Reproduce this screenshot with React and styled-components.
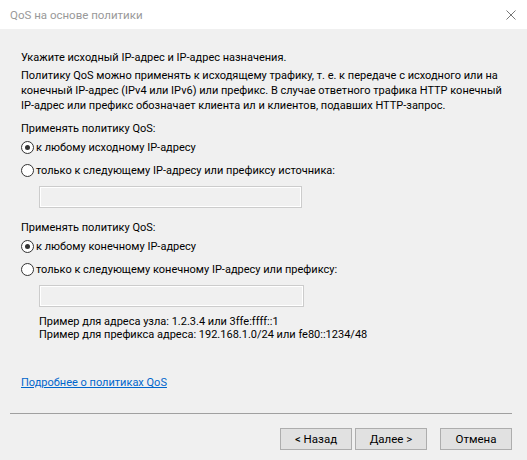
import React from "react";
import styled, { createGlobalStyle } from "styled-components";

const GlobalStyle = createGlobalStyle`
  body {
    margin: 0;
    background: #f0f0f0;
    font-family: Roboto, "Liberation Sans", sans-serif;
    font-size: 11px;
    color: #000;
  }
`;

const Window = styled.div`
  width: 527px;
  height: 460px;
  display: flex;
  flex-direction: column;
  background: #f0f0f0;
  overflow: hidden;
`;

const TitleBar = styled.div`
  height: 29px;
  background: #fff;
  display: flex;
  align-items: center;
  justify-content: space-between;
  padding: 0 10px;
  color: #999;
  font-size: 11.5px;
`;

const Body = styled.div`
  flex: 1;
  display: flex;
  flex-direction: column;
  padding: 21px 21px 0 21px;
`;

const Para = styled.div`
  line-height: ${(p) => p.$lh || 15}px;
  white-space: nowrap;
  margin-top: ${(p) => p.$mt || 0}px;
  padding-left: ${(p) => p.$indent || 0}px;
`;

const RadioRow = styled.label`
  display: flex;
  align-items: center;
  height: 15px;
  margin-top: ${(p) => p.$mt || 0}px;
  white-space: nowrap;
`;

const RadioCircle = styled.span`
  width: 11px;
  height: 11px;
  border: 1px solid #333;
  border-radius: 50%;
  background: #fff;
  display: flex;
  align-items: center;
  justify-content: center;
  margin-right: 2px;
  flex-shrink: 0;

  &::after {
    content: "";
    width: 5px;
    height: 5px;
    border-radius: 50%;
    background: ${(p) => (p.$checked ? "#333" : "transparent")};
  }
`;

const TextBox = styled.div`
  width: ${(p) => p.$w}px;
  height: 20px;
  margin-left: 18px;
  margin-top: ${(p) => p.$mt || 0}px;
  border: 1px solid #cccccc;
  box-shadow: inset 0 0 0 1px #fff;
  background: #f0f0f0;
`;

const Link = styled.a`
  color: #0066cc;
  text-decoration: underline;
  line-height: 15px;
  margin-top: ${(p) => p.$mt || 0}px;
  align-self: flex-start;
`;

const Footer = styled.div`
  padding: 0 15px 10px 10px;
`;

const Separator = styled.div`
  height: 1px;
  background: #a0a0a0;
  margin-bottom: 14px;
`;

const ButtonRow = styled.div`
  display: flex;
  justify-content: flex-end;
`;

const Button = styled.button`
  width: 72px;
  height: 22px;
  margin-left: ${(p) => p.$ml || 0}px;
  background: #e1e1e1;
  border: 1px solid #adadad;
  font-family: inherit;
  font-size: 11.5px;
  color: #000;
  padding: 0;
`;

function Radio({ checked, mt, children }) {
  return (
    <RadioRow $mt={mt}>
      <RadioCircle $checked={checked} />
      {children}
    </RadioRow>
  );
}

function CloseIcon() {
  return (
    <svg width="10" height="10" viewBox="0 0 10 10" style={{ marginRight: 1 }}>
      <path d="M0.5 0.5 L9.5 9.5 M9.5 0.5 L0.5 9.5" stroke="#777" strokeWidth="1" />
    </svg>
  );
}

export default function App() {
  return (
    <>
      <GlobalStyle />
      <Window>
        <TitleBar>
          <span>QoS на основе политики</span>
          <CloseIcon />
        </TitleBar>
        <Body>
          <Para>Укажите исходный IP-адрес и IP-адрес назначения.</Para>
          <Para $mt={3}>
            Политику QoS можно применять к исходящему трафику, т. е. к передаче с исходного или на
            <br />
            конечный IP-адрес (IPv4 или IPv6) или префикс. В случае ответного трафика HTTP конечный
            <br />
            IP-адрес или префикс обозначает клиента ил и клиентов, подавших HTTP-запрос.
          </Para>
          <Para $mt={8}>Применять политику QoS:</Para>
          <Radio checked mt={4}>к любому исходному IP-адресу</Radio>
          <Radio mt={8}>только к следующему IP-адресу или префиксу источника:</Radio>
          <TextBox $w={261} $mt={8} />
          <Para $mt={12}>Применять политику QoS:</Para>
          <Radio checked mt={4}>к любому конечному IP-адресу</Radio>
          <Radio mt={8}>только к следующему конечному IP-адресу или префиксу:</Radio>
          <TextBox $w={263} $mt={8} />
          <Para $lh={13} $mt={8} $indent={18}>
            Пример для адреса узла: 1.2.3.4 или 3ffe:ffff::1
            <br />
            Пример для префикса адреса: 192.168.1.0/24 или fe80::1234/48
          </Para>
          <Link href="#" $mt={34}>Подробнее о политиках QoS</Link>
        </Body>
        <Footer>
          <Separator />
          <ButtonRow>
            <Button>&lt; Назад</Button>
            <Button $ml={3}>Далее &gt;</Button>
            <Button $ml={13}>Отмена</Button>
          </ButtonRow>
        </Footer>
      </Window>
    </>
  );
}
